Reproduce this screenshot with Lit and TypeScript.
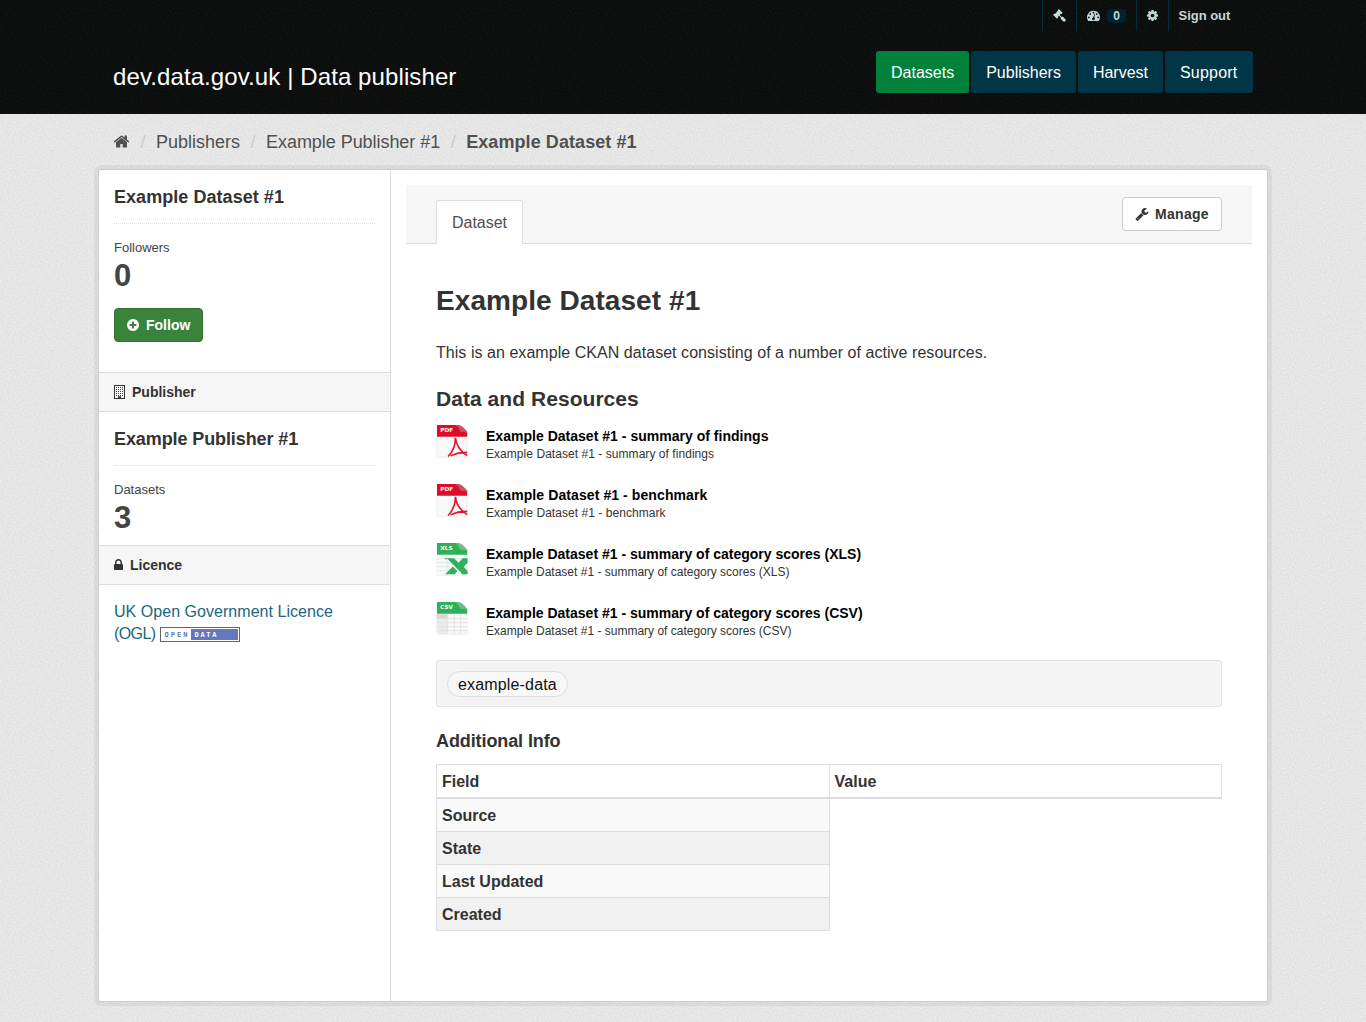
import { LitElement, html, css, svg, unsafeCSS } from "lit";
import { customElement } from "lit/decorators.js";

const ICONS: Record<string, string> = {
  home: "M1472 992v480q0 26-19 45t-45 19h-384v-384h-256v384h-384q-26 0-45-19t-19-45v-480q0-1 .5-3t.5-3l575-474 575 474q1 2 1 6zm223-69l-62 74q-8 9-21 11h-3q-13 0-21-7l-692-577-692 577q-12 8-24 7-13-2-21-11l-62-74q-8-10-7-23.5t11-21.5l719-599q32-26 76-26t76 26l244 204v-195q0-14 9-23t23-9h192q14 0 23 9t9 23v408l219 182q10 8 11 21.5t-7 23.5z",
  gavel: "M1771 1536q0 53-37 90l-107 108q-39 37-91 37-53 0-90-37l-363-364q-38-36-38-90 0-53 43-96l-256-256-126 126q-14 14-34 14t-34-14q2 2 12.5 12t12.5 13 10 11.5 10 13.5 6 13.5 5.5 16.5 1.5 18q0 38-28 68-3 3-16.5 18t-19 20.5-18.5 16.5-22 15.5-22 9-26 4.5q-40 0-68-28l-408-408q-28-28-28-68 0-13 4.5-26t9-22 15.5-22 16.5-18.5 20.5-19 18-16.5q30-28 68-28 10 0 18 1.5t16.5 5.5 13.5 6 13.5 10 11.5 10 13 12.5 12 12.5q-14-14-14-34t14-34l348-348q14-14 34-14t34 14q-2-2-12.5-12t-12.5-13-10-11.5-10-13.5-6-13.5-5.5-16.5-1.5-18q0-38 28-68 3-3 16.5-18t19-20.5 18.5-16.5 22-15.5 22-9 26-4.5q40 0 68 28l408 408q28 28 28 68 0 13-4.5 26t-9 22-15.5 22-16.5 18.5-20.5 19-18 16.5q-30 28-68 28-10 0-18-1.5t-16.5-5.5-13.5-6-13.5-10-11.5-10-13-12.5-12-12.5q14 14 14 34t-14 34l-126 126 256 256q43-43 96-43 52 0 91 37l363 363q37 39 37 91z",
  gauge: "M384 1152q0-53-37.5-90.5t-90.5-37.5-90.5 37.5-37.5 90.5 37.5 90.5 90.5 37.5 90.5-37.5 37.5-90.5zm192-448q0-53-37.5-90.5t-90.5-37.5-90.5 37.5-37.5 90.5 37.5 90.5 90.5 37.5 90.5-37.5 37.5-90.5zm428 481l101-382q6-26-7.5-48.5t-38.5-29.5-48 6.5-30 39.5l-101 382q-60 5-107 43.5t-63 98.5q-20 77 20 146t117 89 146-20 89-117q16-60-6-117t-72-91zm660-33q0-53-37.5-90.5t-90.5-37.5-90.5 37.5-37.5 90.5 37.5 90.5 90.5 37.5 90.5-37.5 37.5-90.5zm-640-640q0-53-37.5-90.5t-90.5-37.5-90.5 37.5-37.5 90.5 37.5 90.5 90.5 37.5 90.5-37.5 37.5-90.5zm448 192q0-53-37.5-90.5t-90.5-37.5-90.5 37.5-37.5 90.5 37.5 90.5 90.5 37.5 90.5-37.5 37.5-90.5zm320 448q0 261-141 483-19 29-54 29h-1402q-35 0-54-29-141-221-141-483 0-182 71-348t191-286 286-191 348-71 348 71 286 191 191 286 71 348z",
  cog: "M1152 896q0-106-75-181t-181-75-181 75-75 181 75 181 181 75 181-75 75-181zm512-109v222q0 12-8 23t-20 13l-185 28q-19 54-39 91 35 50 107 138 10 12 10 25t-9 23q-27 37-99 108t-94 71q-12 0-26-9l-138-108q-44 23-91 38-16 136-29 186-7 28-36 28h-222q-14 0-24.5-8.5t-11.5-21.5l-28-184q-49-16-90-37l-141 107q-10 9-25 9-14 0-25-11-126-114-165-168-7-10-7-23 0-12 8-23 15-21 51-66.5t54-70.5q-27-50-41-99l-183-27q-13-2-21-12.5t-8-23.5v-222q0-12 8-23t19-13l186-28q14-46 39-92-40-57-107-138-10-12-10-24 0-10 9-23 26-36 98.5-107.5t94.5-71.5q13 0 26 10l138 107q44-23 91-38 16-136 29-186 7-28 36-28h222q14 0 24.5 8.5t11.5 21.5l28 184q49 16 90 37l142-107q9-9 24-9 13 0 25 10 129 119 165 170 7 8 7 22 0 12-8 23-15 21-51 66.5t-54 70.5q26 50 41 98l183 28q13 2 21 12.5t8 23.5z",
  plus: "M1344 960v-128q0-26-19-45t-45-19h-256v-256q0-26-19-45t-45-19h-128q-26 0-45 19t-19 45v256h-256q-26 0-45 19t-19 45v128q0 26 19 45t45 19h256v256q0 26 19 45t45 19h128q26 0 45-19t19-45v-256h256q26 0 45-19t19-45zm320-64q0 209-103 385.5t-279.5 279.5-385.5 103-385.5-103-279.5-279.5-103-385.5 103-385.5 279.5-279.5 385.5-103 385.5 103 279.5 279.5 103 385.5z",
  lock: "M640 768h512v-192q0-106-75-181t-181-75-181 75-75 181v192zm832 96v576q0 40-28 68t-68 28h-960q-40 0-68-28t-28-68v-576q0-40 28-68t68-28h32v-192q0-184 132-316t316-132 316 132 132 316v192h32q40 0 68 28t28 68z",
  wrench: "M448 1472q0-26-19-45t-45-19-45 19-19 45 19 45 45 19 45-19 19-45zm644-420l-682 682q-37 37-90 37-52 0-91-37l-106-108q-38-36-38-90 0-53 38-91l681-681q39 98 114.5 173.5t173.5 114.5zm634-435q0 39-23 106-47 134-164.5 217.5t-258.5 83.5q-185 0-316.5-131.5t-131.5-316.5 131.5-316.5 316.5-131.5q58 0 121.5 16.5t107.5 46.5q16 11 16 28t-16 28l-293 169v224l193 107q5-3 79-48.5t135.5-81 70.5-35.5q15 0 23.5 10t8.5 25z",
};

const icon = (name: string, size: number) =>
  html`<svg class="icon" width=${size} height=${size} viewBox="0 0 1792 1792"><path fill="currentColor" d=${ICONS[name]} /></svg>`;

const lockIcon = () =>
  html`<svg class="icon" width="9" height="14" viewBox="320 0 1152 1792"><path fill="currentColor" d=${ICONS.lock} /></svg>`;

const building = () => {
  const dots = [];
  for (let r = 0; r < 5; r++)
    for (let c = 0; c < 4; c++)
      dots.push(svg`<rect x=${2 + c * 2} y=${2 + r * 2} width="1" height="1" />`);
  return html`<svg class="icon" width="11" height="14" viewBox="0 0 11 14">
    <rect x="0.5" y="0.5" width="10" height="13" fill="none" stroke="#333" />
    <g fill="#444">${dots}</g><rect x="4" y="11.3" width="3" height="2.2" fill="#333" />
  </svg>`;
};

const fileIcon = (kind: string) => {
  const red = kind === "PDF";
  const main = red ? "#dc0d28" : "#2eb05c";
  const art = red
    ? svg`<path d="M18.700 13.500q.6 10.500-7.200 18.800M18.900 14q1 10.500 11.700 17.500M14 31.500q8-3.500 16.600-3.300" fill="none" stroke="#e0152d" stroke-width="1.600" />`
    : kind === "XLS"
      ? svg`<path d="M0 16.500h31M0 20.500h31M0 24.500h31M0 28.500h31M10.500 13v20" stroke="#dfe2df" stroke-width=".7" />
        <path d="M8 16h9.500l4.500 4.500 4-4.500h5v4.500L27 24.500l4 4.500v3h-5.500l-4-4-3.500 4H8.500l8-8z" fill="#2eb05c" /><path d="M10 17l14 14" stroke="#fff" stroke-width="1.600" />`
      : svg`<path d="M0 13h11v20H0z" fill="#ebebeb" /><path d="M0 13h11v4.500H0z" fill="#d5d8d5" />
        <path d="M0 17.500h31M0 21.500h31M0 25.500h31M0 29.500h31M11 13v20M17.500 13v20M24 13v20" stroke="#dcdedc" stroke-width=".8" />`;
  return html`<svg class="file" width="32" height="35" viewBox="0 0 32 35">
    <path d="M1 1.500h20l10 8v22.500q0 1.300-1 1.300H2q-1 0-1-1.300z" fill="#f9f9f9" stroke="#e4e4e4" stroke-width=".6" />
    <g transform="translate(.6 .2)">${art}</g>
    <path d="M1 1h20L31.200 8v4.800H1z" fill=${main} />
    <path d="M19.500 1h3.500q4 1 8.200 6.800v1.200q-4-1.600-6.500-1Q22.500 3 19.500 1z" fill=${red ? "#c8525e" : "#74bd86"} />
    <text x="4.300" y="8.300" class="ext" textLength=${kind === "PDF" ? 13 : 12.5} lengthAdjust="spacingAndGlyphs">${kind}</text>
  </svg>`;
};

const noise = (m: string) =>
  unsafeCSS(
    `url("data:image/svg+xml,%3Csvg xmlns='http://www.w3.org/2000/svg' width='100' height='100'%3E%3Cfilter id='n' x='0' y='0' width='100%25' height='100%25' color-interpolation-filters='sRGB'%3E%3CfeTurbulence type='fractalNoise' baseFrequency='.6' numOctaves='2' stitchTiles='stitch'/%3E%3CfeColorMatrix values='${m}'/%3E%3C/filter%3E%3Crect width='100' height='100' filter='url(%23n)'/%3E%3C/svg%3E")`
  );
const lightNoise = noise("0 0 0 0 1 0 0 0 0 1 0 0 0 0 1 .9 0 0 0 -.32");
const darkNoise = noise("0 0 0 0 .3 0 0 0 0 .33 0 0 0 0 .33 .3 0 0 0 -.12");

const RESOURCES = [
  { kind: "PDF", name: "Example Dataset #1 - summary of findings" },
  { kind: "PDF", name: "Example Dataset #1 - benchmark" },
  { kind: "XLS", name: "Example Dataset #1 - summary of category scores (XLS)" },
  { kind: "CSV", name: "Example Dataset #1 - summary of category scores (CSV)" },
];

@customElement("app-root")
export class AppRoot extends LitElement {
  static styles = css`
    :host {
      display: block;
      height: 1022px;
      overflow: hidden;
      box-sizing: border-box;
      font: 16px/22px "Liberation Sans", Arial, sans-serif;
      color: #444;
      background: ${lightNoise}, #e2e2e2;
    }
    *, *::before { box-sizing: border-box; }
    h1, h2, h3, p, ul { margin: 0; padding: 0; }
    ul { list-style: none; }
    a { color: inherit; text-decoration: none; }
    .icon { display: block; flex: none; }
    .top { height: 114px; background: ${darkNoise}, #0b0c0c; color: #fff; }
    .wrap { width: 1170px; margin: 0 auto; }
    .account { display: flex; justify-content: flex-end; height: 31px; padding-right: 28px; font: bold 13px/31px "Liberation Sans", Arial, sans-serif; color: #c6d7db; }
    .account > li { display: flex; align-items: center; border-left: 1px solid #00303c; padding: 0 10px; }
    .account .out { width: 72px; padding: 0 0 0 9.5px; letter-spacing: -0.03px; }
    .account .cogs { padding: 0 10px 0 9px; width: 32px; }
    .count { background: #00222f; border-radius: 4px; width: 19px; height: 14px; line-height: 15px; text-align: center; margin-left: 7px; font-size: 12px; }
    .brandrow { display: flex; justify-content: space-between; padding: 20px 15px 0; }
    .brand { font-size: 24px; line-height: 52px; letter-spacing: 0.1px; }
    .nav { display: flex; gap: 2px; }
    .nav li { height: 42px; line-height: 43px; padding: 0 15px; border-radius: 3px; background: #003647; }
    .nav .on { background: #00823b; }
    .nav li:last-child { width: 88px; letter-spacing: 0.2px; }
    .crumbs { display: flex; align-items: center; height: 55px; padding-left: 15px; font-size: 18px; color: #505050; }
    .crumbs li + li { display: flex; }
    .crumbs li + li::before { content: "/"; width: 26px; text-align: center; color: #ccc; }
    .crumbs .pubname { letter-spacing: -0.05px; }
    .crumbs .cur { font-weight: bold; letter-spacing: 0.08px; }
    .panel { display: flex; height: 833px; background: #fff; border: 1px solid #ccc; border-radius: 3px; box-shadow: 0 0 0 4px rgba(0, 0, 0, 0.05); }
    .side { width: 292px; border-right: 1px solid #ddd; color: #333; }
    .info { padding: 0 15px; }
    .info h2 { font-size: 18px; height: 54px; line-height: 54px; border-bottom: 1px dotted #ddd; letter-spacing: 0.05px; }
    .pub h2 { letter-spacing: -0.1px; }
    .lab { font-size: 13px; line-height: 18px; padding-top: 15px; color: #444; }
    .num { font-size: 31px; line-height: 37px; font-weight: bold; color: #444; }
    .follow { display: inline-flex; align-items: center; gap: 6px; height: 34px; width: 89px; padding-left: 11px; margin: 14px 0 30px; background: #3a833a; border: 1px solid #327032; border-radius: 4px; color: #fff; font: bold 14px "Liberation Sans", Arial, sans-serif; }
    .bar { display: flex; align-items: center; gap: 7px; height: 40px; padding-left: 15px; border: solid #ddd; border-width: 1px 0; background: #f6f6f6; font-size: 14px; }
    .pub { padding-bottom: 9px; }
    .lic { padding: 16px 15px; color: #1b6680; letter-spacing: 0.04px; }
    .ogl { letter-spacing: -0.6px; }
    .badge { vertical-align: -3px; }
    .badge text { font: bold 7px "DejaVu Sans Mono", monospace; }
    .main { flex: 1; padding: 15px 15px 0; }
    .head { display: flex; justify-content: space-between; height: 59px; padding: 0 30px; background: #f6f6f6; border-bottom: 1px solid #ddd; }
    .tab { height: 44px; width: 87px; margin-top: 15px; background: #fff; border: 1px solid #ddd; border-bottom: 0; border-radius: 3px 3px 0 0; text-align: center; line-height: 43px; color: #505050; }
    .manage { display: flex; align-items: center; gap: 6px; width: 100px; height: 34px; margin-top: 12px; padding-left: 12px; border: 1px solid #ccc; border-radius: 4px; background: #fff; color: #333; font: bold 14px "Liberation Sans", Arial, sans-serif; letter-spacing: 0.3px; }
    .body { padding: 40px 30px 0; color: #333; }
    .body h1 { font-size: 28px; line-height: 34px; letter-spacing: 0.07px; }
    .body p { margin-top: 24px; line-height: 22px; letter-spacing: 0.045px; }
    .body h2 { font-size: 21px; line-height: 28px; margin: 21px 0 11px; letter-spacing: 0.05px; }
    .res { display: flex; height: 59px; }
    .res .txt { padding-left: 18px; }
    .res .n { font: bold 14px/20px "Liberation Sans", Arial, sans-serif; color: #000; padding-top: 2px; }
    .res .d { font-size: 12px; line-height: 15px; padding-top: 1px; color: #333; }
    .res:nth-child(1) .n { letter-spacing: 0.02px; }
    .res:nth-child(2) .n { letter-spacing: 0.09px; }
    .res:nth-child(-n + 2) .d { letter-spacing: 0.05px; }
    .file { display: block; flex: none; }
    .ext { font: bold 5.5px "DejaVu Sans", sans-serif; fill: #fff; }
    .tags { height: 47px; border: 1px solid #e2e2e2; border-radius: 3px; background: #f4f4f4; padding: 10px; }
    .tag { display: inline-block; height: 26px; line-height: 25px; padding: 0 10px; border: 1px solid #ddd; border-radius: 100px; background: #f8f8f8; color: #111; letter-spacing: 0.16px; }
    .body h3 { font-size: 18px; line-height: 24px; margin: 22px 0 11px; letter-spacing: -0.1px; }
    table { border-collapse: collapse; width: 786px; table-layout: fixed; }
    th { text-align: left; border: 1px solid #ddd; padding: 6px 5px 4px; height: 33px; line-height: 22px; }
    thead th { border-bottom: 2px solid #ddd; line-height: 21px; }
    tbody tr:nth-child(odd) th { background: #f9f9f9; }
    tbody tr:nth-child(even) th { background: #f1f1f1; }
  `;

  render() {
    return html`
      <header class="top">
        <div class="wrap">
          <ul class="account">
            <li>${icon("gavel", 13)}</li>
            <li>${icon("gauge", 13)}<span class="count">0</span></li>
            <li class="cogs">${icon("cog", 13)}</li>
            <li class="out"><a>Sign out</a></li>
          </ul>
          <div class="brandrow">
            <div class="brand">dev.data.gov.uk | Data publisher</div>
            <ul class="nav"><li class="on">Datasets</li><li>Publishers</li><li>Harvest</li><li>Support</li></ul>
          </div>
        </div>
      </header>
      <div class="wrap">
        <ul class="crumbs">
          <li>${icon("home", 17)}</li><li>Publishers</li><li class="pubname">Example Publisher #1</li><li><span class="cur">Example Dataset #1</span></li>
        </ul>
        <div class="panel">
          <aside class="side">
            <div class="info">
              <h2>Example Dataset #1</h2>
              <div class="lab">Followers</div>
              <div class="num">0</div>
              <a class="follow">${icon("plus", 14)}<span>Follow</span></a>
            </div>
            <div class="bar">${building()}<b>Publisher</b></div>
            <div class="info pub">
              <h2>Example Publisher #1</h2>
              <div class="lab">Datasets</div>
              <div class="num">3</div>
            </div>
            <div class="bar">${lockIcon()}<b>Licence</b></div>
            <div class="lic">UK Open Government Licence<br /><span class="ogl">(OGL)</span>
              <svg class="badge" width="80" height="15" viewBox="0 0 80 15">
                <rect x=".5" y=".5" width="79" height="14" fill="#fff" stroke="#666" />
                <rect x="31" y="2" width="47" height="11" fill="#6379bd" />
                <text x="4.500" y="10" fill="#6379bd" textLength="23">OPEN</text>
                <text x="34.500" y="10" fill="#fff" textLength="22">DATA</text>
              </svg>
            </div>
          </aside>
          <main class="main">
            <div class="head">
              <div class="tab">Dataset</div>
              <a class="manage">${icon("wrench", 14)}<span>Manage</span></a>
            </div>
            <div class="body">
              <h1>Example Dataset #1</h1>
              <p>This is an example CKAN dataset consisting of a number of active resources.</p>
              <h2>Data and Resources</h2>
              <ul>
                ${RESOURCES.map((r) => html`<li class="res">${fileIcon(r.kind)}<div class="txt"><div class="n">${r.name}</div><div class="d">${r.name}</div></div></li>`)}
              </ul>
              <div class="tags"><span class="tag">example-data</span></div>
              <h3>Additional Info</h3>
              <table>
                <thead><tr><th>Field</th><th>Value</th></tr></thead>
                <tbody>${["Source", "State", "Last Updated", "Created"].map((f) => html`<tr><th>${f}</th></tr>`)}</tbody>
              </table>
            </div>
          </main>
        </div>
      </div>
    `;
  }
}
